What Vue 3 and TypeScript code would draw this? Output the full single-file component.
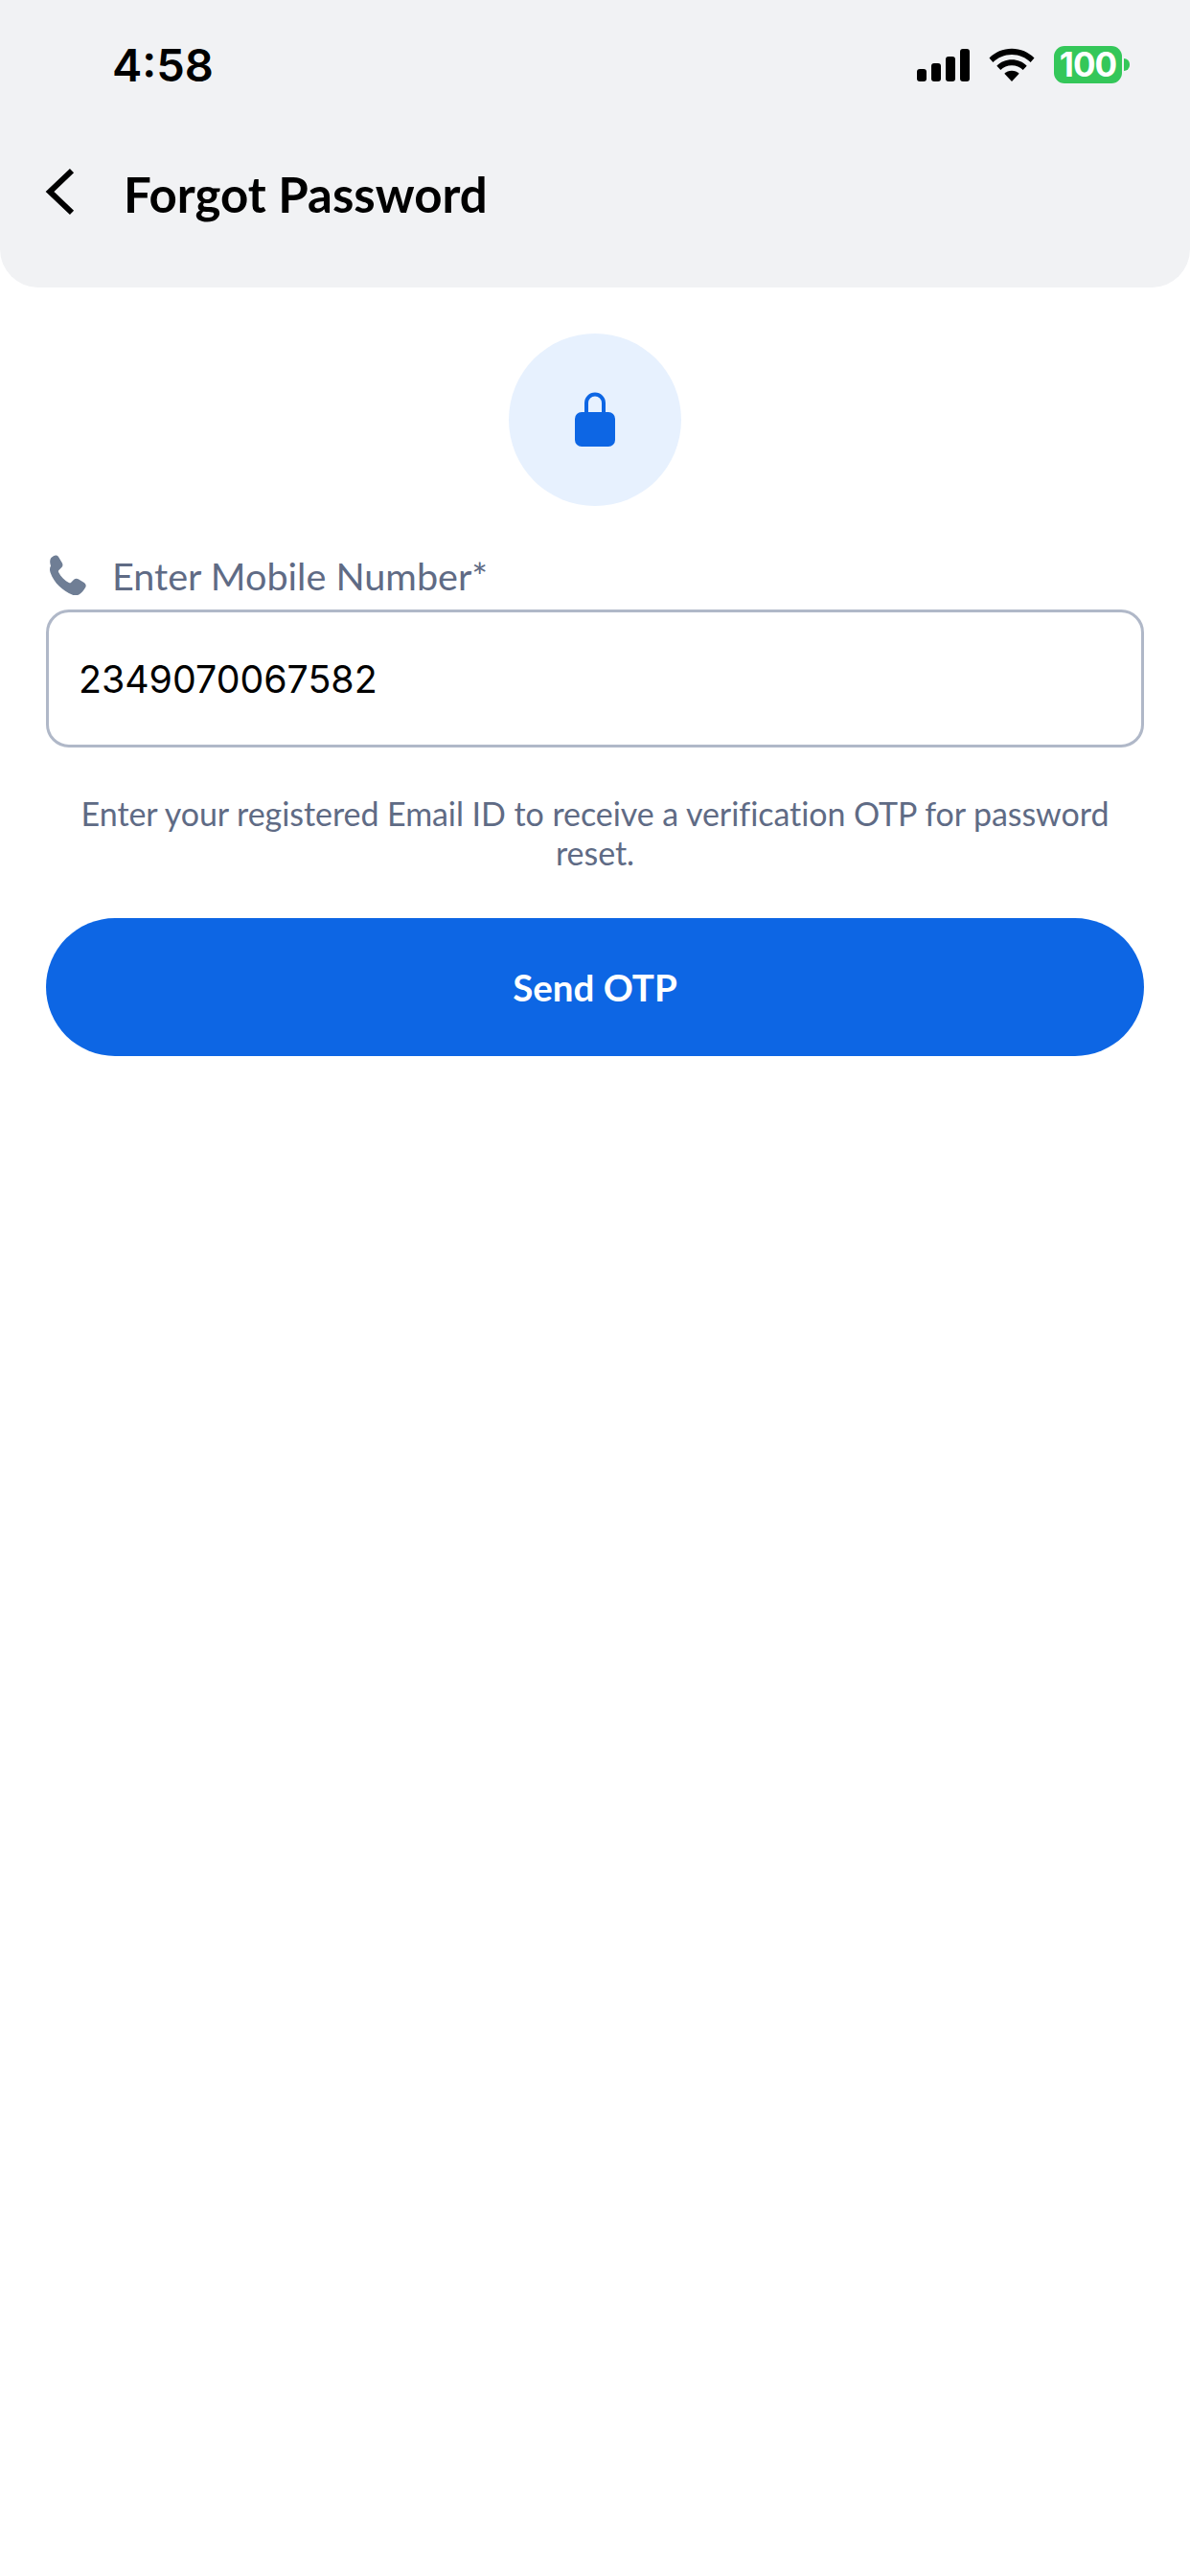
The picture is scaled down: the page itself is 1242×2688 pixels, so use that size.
<template>
  <div class="page">
    <header class="header">
      <div class="status-bar">
        <span class="time">4:58</span>
        <div class="status-icons">
          <svg class="signal" width="55" height="36" viewBox="0 0 55 36">
            <rect x="0" y="22" width="10" height="13" rx="3" />
            <rect x="15" y="16" width="10" height="19" rx="3" />
            <rect x="30" y="9" width="10" height="26" rx="3" />
            <rect x="45" y="1" width="10" height="34" rx="3" />
          </svg>
          <svg class="wifi" width="48" height="36" viewBox="0 0 48 36">
            <path d="M0.5 10.5C6.5 4.5 14.8 0.8 24 0.8s17.5 3.7 23.5 9.700L43.600 15C38.600 10 31.700 6.900 24 6.900S9.400 10 4.400 15z" />
            <path d="M8.300 18.700C12.300 14.700 17.900 12.300 24 12.300s11.700 2.400 15.700 6.400L35.700 23C32.700 20 28.600 18.200 24 18.200s-8.700 1.800-11.700 4.800z" />
            <path d="M16.300 26.800C18.300 24.900 21 23.700 24 23.700s5.700 1.200 7.700 3.100L24 35z" />
          </svg>
          <div class="battery">
            <div class="battery-body">100</div>
            <div class="battery-cap"></div>
          </div>
        </div>
      </div>
      <div class="nav">
        <svg class="back" width="36" height="56" viewBox="0 0 36 56">
          <path d="M31 4.100 L8 26 L31 47.900" />
        </svg>
        <h1 class="title">Forgot Password</h1>
      </div>
    </header>

    <main class="content">
      <div class="lock-circle">
        <svg width="44" height="58" viewBox="0 0 44 58">
          <path class="shackle" d="M13 24V11.500a9 9 0 0 1 18 0V24" />
          <rect x="1" y="21" width="42" height="36" rx="7" />
        </svg>
      </div>

      <div class="field-label">
        <svg class="phone" width="42" height="42" viewBox="2 0.500 38.500 38.500">
          <path d="M9.500 1.500c1.700-1 3.700-.4 4.700 1.200l3.300 5.600c.8 1.400.6 3-.5 4.200l-2.700 2.700c-.5.500-.6 1.100-.3 1.700 1.100 2.200 2.500 4.200 4.300 6 1.800 1.800 3.800 3.200 6 4.300.6.300 1.200.2 1.700-.3l2.700-2.700c1.200-1.100 2.800-1.300 4.200-.5l5.600 3.300c1.600 1 2.200 3 1.200 4.700-1.400 2.500-3.300 5-5.900 6.600-2 1.200-4 1.200-6.300.4-5-1.800-9.300-4.600-13-8.300-3.700-3.700-6.500-8-8.300-13-.8-2.300-.8-4.300.4-6.300C4.500 4.800 7 2.900 9.500 1.500z" />
        </svg>
        <span>Enter Mobile Number*</span>
      </div>

      <div class="input-box">{{ phoneNumber }}</div>

      <p class="hint">Enter your registered Email ID to receive a verification OTP for password reset.</p>

      <button class="send-btn" type="button">Send OTP</button>
    </main>
  </div>
</template>

<script setup lang="ts">
const phoneNumber: string = '2349070067582'
</script>

<style>
html,
body {
  margin: 0;
  background: #fff;
}
</style>

<style scoped>
.page {
  width: 1242px;
  min-height: 2688px;
  background: #fff;
  font-family: Lato, 'Liberation Sans', sans-serif;
}

.header {
  box-sizing: border-box;
  height: 300px;
  background: #f1f2f4;
  border-radius: 0 0 40px 40px;
}

.status-bar {
  box-sizing: border-box;
  height: 168px;
  padding: 41px 63px 0 117px;
  display: flex;
  justify-content: space-between;
  align-items: flex-start;
}

.time {
  font-family: Inter, sans-serif;
  font-weight: 600;
  font-size: 47px;
  line-height: 54px;
  color: #000;
}

.status-icons {
  display: flex;
  align-items: center;
  gap: 20px;
  padding-top: 7px;
}

.signal rect,
.wifi path {
  fill: #000;
}

.battery {
  display: flex;
  align-items: center;
  gap: 2px;
}

.battery-body {
  width: 71px;
  height: 39px;
  border-radius: 11px;
  background: #34c759;
  color: #fff;
  font-family: Inter, sans-serif;
  font-weight: 700;
  font-size: 35px;
  letter-spacing: -1px;
  line-height: 39px;
  text-align: center;
}

.battery-cap {
  width: 6px;
  height: 13px;
  border-radius: 0 6px 6px 0;
  background: #34c759;
}

.nav {
  display: flex;
  align-items: center;
  gap: 49px;
  padding-left: 44px;
  height: 68px;
}

.back path {
  fill: none;
  stroke: #000;
  stroke-width: 6;
}

.title {
  margin: 0;
  font-size: 51px;
  font-weight: 700;
  color: #000;
}

.content {
  display: flex;
  flex-direction: column;
  align-items: center;
  padding: 48px 48px 0;
}

.lock-circle {
  width: 180px;
  height: 180px;
  border-radius: 50%;
  background: #e7f1fe;
  display: flex;
  align-items: center;
  justify-content: center;
}

.lock-circle rect {
  fill: #0d66e4;
}

.shackle {
  fill: none;
  stroke: #0d66e4;
  stroke-width: 4;
}

.field-label {
  align-self: stretch;
  display: flex;
  align-items: center;
  gap: 27px;
  margin-top: 50px;
  height: 44px;
  font-size: 39.6px;
  color: #5f6b85;
}

.phone path {
  fill: #6f7e95;
}

.input-box {
  box-sizing: border-box;
  align-self: stretch;
  height: 144px;
  margin-top: 14px;
  padding: 0 31px;
  display: flex;
  align-items: center;
  border: 3px solid #b0b8c8;
  border-radius: 24px;
  font-family: Inter, sans-serif;
  font-size: 39.3px;
  color: #000;
}

.hint {
  margin: 48px 0 0;
  padding: 0 30px;
  font-size: 34px;
  letter-spacing: -0.06px;
  line-height: 41px;
  text-align: center;
  color: #5f6b85;
}

.send-btn {
  align-self: stretch;
  height: 144px;
  margin-top: 48px;
  padding: 0;
  border: none;
  border-radius: 72px;
  background: #0d66e4;
  color: #fff;
  font-family: Lato, 'Liberation Sans', sans-serif;
  font-weight: 700;
  font-size: 38.5px;
}
</style>
